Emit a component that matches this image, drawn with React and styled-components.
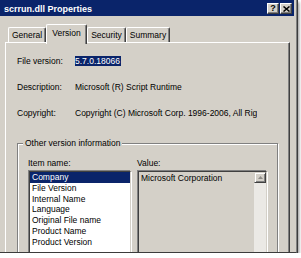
import React from "react";
import styled, { createGlobalStyle } from "styled-components";

const GRAY = "#d4d0c8";
const NAVY = "#0a246a";

const GlobalStyle = createGlobalStyle`
  html, body {
    margin: 0;
    padding: 0;
    background: #ffffff;
  }
  body {
    font-family: "Liberation Sans", Arial, sans-serif;
    font-size: 8.5px;
    color: #000;
  }
`;

const items = [
  "Company",
  "File Version",
  "Internal Name",
  "Language",
  "Original File name",
  "Product Name",
  "Product Version",
];

const fields = [
  { label: "File version:", value: "5.7.0.18066", selected: true },
  { label: "Description:", value: "Microsoft (R) Script Runtime" },
  {
    label: "Copyright:",
    value: "Copyright (C) Microsoft Corp. 1996-2006, All Rights Reserved.",
  },
];

const tabs = [
  { name: "General", width: 38 },
  { name: "Version", width: 41, active: true },
  { name: "Security", width: 39 },
  { name: "Summary", width: 44 },
];

export default function App() {
  return (
    <>
      <GlobalStyle />
      <Frame>
        <TitleBar>
          <Title>scrrun.dll Properties</Title>
          <CaptionButtons>
            <CaptionButton>
              <HelpGlyph>?</HelpGlyph>
            </CaptionButton>
            <CaptionButton>
              <svg width="7" height="6" viewBox="0 0 7 6">
                <path d="M0.5 0.5 L6.5 5.5 M6.5 0.5 L0.5 5.5" stroke="#000" strokeWidth="1.5" />
              </svg>
            </CaptionButton>
          </CaptionButtons>
        </TitleBar>

        <TabStrip>
          {tabs.map((t) => (
            <Tab key={t.name} $active={t.active} $width={t.width}>
              {t.name}
            </Tab>
          ))}
        </TabStrip>

        <Panel>
          {fields.map((f) => (
            <FieldRow key={f.label}>
              <FieldLabel>{f.label}</FieldLabel>
              <FieldValue>
                {f.selected ? <Selected>{f.value}</Selected> : f.value}
              </FieldValue>
            </FieldRow>
          ))}

          <GroupBox>
            <GroupTitle>Other version information</GroupTitle>
            <Columns>
              <ColumnLabel>Item name:</ColumnLabel>
              <ColumnLabel>Value:</ColumnLabel>
              <ListBox>
                {items.map((it, i) => (
                  <ListItem key={it} $selected={i === 0}>
                    {it}
                  </ListItem>
                ))}
              </ListBox>
              <ValueBox>
                <ValueText>Microsoft Corporation</ValueText>
                <ScrollBar>
                  <ScrollButton>
                    <svg width="5" height="3" viewBox="0 0 5 3">
                      <path d="M2.5 0 L5 3 L0 3 Z" fill="#8c8a86" />
                    </svg>
                  </ScrollButton>
                </ScrollBar>
              </ValueBox>
            </Columns>
          </GroupBox>
        </Panel>
      </Frame>
    </>
  );
}

const Frame = styled.div`
  width: 296px;
  height: 252px;
  background: ${GRAY};
  border-right: 1px solid #808080;
  border-bottom: 1px solid #3c3c3c;
  box-shadow: 1px 0 0 #3c3c3c, 2px 2px 3px rgba(0, 0, 0, 0.45);
  overflow: hidden;
  display: flex;
  flex-direction: column;
`;

const TitleBar = styled.div`
  height: 16px;
  flex: none;
  background: ${NAVY};
  margin-right: 2px;
  display: flex;
  align-items: flex-start;
  justify-content: space-between;
`;

const Title = styled.div`
  color: #fff;
  font-weight: bold;
  font-size: 9px;
  line-height: 16px;
  padding-left: 4px;
  padding-top: 1px;
`;

const CaptionButtons = styled.div`
  display: flex;
  gap: 1px;
  padding-top: 3px;
  padding-right: 2px;
`;

const CaptionButton = styled.div`
  width: 12px;
  height: 11px;
  box-sizing: border-box;
  background: ${GRAY};
  border: 1px solid;
  border-color: #fff #404040 #404040 #fff;
  box-shadow: inset -1px -1px 0 #808080;
  display: flex;
  align-items: center;
  justify-content: center;
`;

const HelpGlyph = styled.span`
  font-weight: bold;
  font-size: 9px;
  line-height: 9px;
  margin-top: -1px;
`;

const TabStrip = styled.div`
  height: 26px;
  flex: none;
  display: flex;
  align-items: flex-end;
  padding-left: 8px;
`;

const Tab = styled.div`
  width: ${(p) => p.$width}px;
  box-sizing: border-box;
  height: ${(p) => (p.$active ? 20 : 15)}px;
  margin-bottom: ${(p) => (p.$active ? -2 : 0)}px;
  padding-bottom: ${(p) => (p.$active ? 3 : 0)}px;
  z-index: ${(p) => (p.$active ? 1 : 0)};
  background: ${GRAY};
  border-top: 1px solid #fff;
  border-left: 1px solid #fff;
  border-right: 1px solid #404040;
  box-shadow: inset -1px 0 0 #808080;
  border-radius: 2px 2px 0 0;
  display: flex;
  align-items: center;
  justify-content: center;
  line-height: 10px;
`;

const Panel = styled.div`
  flex: none;
  margin-left: 5px;
  width: 285px;
  box-sizing: border-box;
  border-top: 1px solid #fff;
  border-left: 1px solid #fff;
  border-right: 1px solid #404040;
  box-shadow: inset -1px 0 0 #808080;
  padding: 13px 11px 0 11px;
`;

const FieldRow = styled.div`
  display: grid;
  grid-template-columns: 58px 182px;
  height: 10px;
  line-height: 10px;
  margin-bottom: 16px;
  white-space: nowrap;
`;

const FieldLabel = styled.div``;

const FieldValue = styled.div`
  overflow: hidden;
`;

const Selected = styled.span`
  background: ${NAVY};
  color: #fff;
  margin-left: -1px;
  padding: 0 1px;
`;

const GroupBox = styled.fieldset`
  margin: 20px 0 0 0;
  width: 261px;
  box-sizing: border-box;
  min-width: 0;
  border: 1px solid #808080;
  box-shadow: inset 1px 1px 0 #fff, 1px 1px 0 #fff;
  padding: 10px 0 0 10px;
  height: 140px;
`;

const GroupTitle = styled.legend`
  line-height: 10px;
  padding: 0 2px;
  margin-left: -5px;
  background: ${GRAY};
`;

const Columns = styled.div`
  display: grid;
  grid-template-columns: 103px 130px;
  column-gap: 6px;
  row-gap: 2px;
  grid-template-rows: 10px 100px;
`;

const ColumnLabel = styled.div`
  line-height: 10px;
`;

const ListBox = styled.div`
  background: #fff;
  border: 1px solid;
  border-color: #404040 ${GRAY} ${GRAY} #404040;
  box-shadow: -1px -1px 0 #808080, 1px 1px 0 #fff;
  margin-left: 1px;
  margin-top: 1px;
`;

const ListItem = styled.div`
  height: 10.8px;
  line-height: 10.8px;
  padding-left: 2px;
  white-space: nowrap;
  background: ${(p) => (p.$selected ? NAVY : "transparent")};
  color: ${(p) => (p.$selected ? "#fff" : "#000")};
`;

const ValueBox = styled.div`
  background: ${GRAY};
  border: 1px solid;
  border-color: #404040 ${GRAY} ${GRAY} #404040;
  box-shadow: -1px -1px 0 #808080, 1px 1px 0 #fff;
  margin-left: 1px;
  margin-top: 1px;
  display: flex;
`;

const ValueText = styled.div`
  flex: 1;
  padding: 1px 0 0 2px;
  line-height: 10px;
  white-space: nowrap;
`;

const ScrollBar = styled.div`
  width: 12px;
  background: #ebe9e5;
  display: flex;
  flex-direction: column;
`;

const ScrollButton = styled.div`
  height: 11px;
  box-sizing: border-box;
  background: ${GRAY};
  border: 1px solid;
  border-color: ${GRAY} #404040 #404040 ${GRAY};
  box-shadow: inset 1px 1px 0 #fff, inset -1px -1px 0 #808080;
  display: flex;
  align-items: center;
  justify-content: center;
`;
